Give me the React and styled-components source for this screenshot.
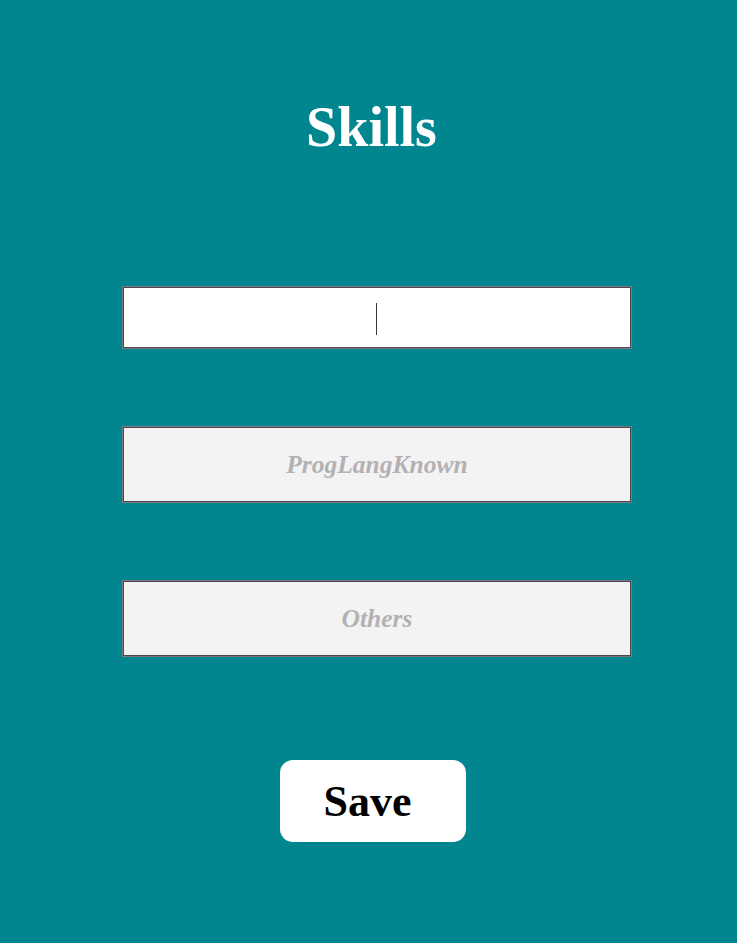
import React from "react";
import styled, { createGlobalStyle } from "styled-components";

const Global = createGlobalStyle`
  html, body { margin: 0; padding: 0; background: #018690; }
  body { font-family: "Liberation Serif", "Times New Roman", serif; }
`;

const Page = styled.main`
  min-height: 943px;
  background: #018690;
  display: flex;
  flex-direction: column;
  align-items: center;
  padding-top: 99px;
  box-sizing: border-box;
`;

const Title = styled.h1`
  margin: 0;
  font-size: 56px;
  line-height: 56px;
  font-weight: 700;
  color: #ffffff;
  padding-left: 6px;
`;

const Form = styled.form`
  display: flex;
  flex-direction: column;
  align-items: center;
  margin-top: 131px;
  width: 510px;
  margin-left: 17px;
`;

const FieldWrap = styled.div`
  position: relative;
  width: 510px;
  margin-bottom: ${(p) => p.$gap}px;
`;

const Field = styled.input`
  display: block;
  box-sizing: border-box;
  width: 510px;
  height: ${(p) => p.$h}px;
  margin: 0;
  border: 1px solid #7b7a82;
  box-shadow: inset 0 0 0 1px #4b4652;
  background: ${(p) => (p.$active ? "#ffffff" : "#f3f3f3")};
  text-align: center;
  font-family: "Liberation Serif", "Times New Roman", serif;
  font-size: 25.5px;
  font-style: italic;
  font-weight: 700;
  color: #333;
  outline: none;
  caret-color: #333;
  &::placeholder {
    color: #b3b1b3;
    font-style: italic;
    font-weight: 700;
  }
`;

const Caret = styled.span`
  position: absolute;
  left: 254px;
  top: 17px;
  width: 1px;
  height: 32px;
  background: #3a3a3a;
  pointer-events: none;
`;

const SaveButton = styled.button`
  width: 186px;
  height: 82px;
  border: none;
  border-radius: 13px;
  background: #ffffff;
  color: #000;
  font-family: "Liberation Serif", "Times New Roman", serif;
  font-size: 44px;
  font-weight: 700;
  padding: 0 10px 0 0;
  margin-left: -9px;
  cursor: pointer;
`;

export default function App() {
  return (
    <Page>
      <Global />
      <Title>Skills</Title>
      <Form onSubmit={(e) => e.preventDefault()}>
        <FieldWrap $gap={77}>
          <Field $h={63} $active aria-label="Skill" />
          <Caret />
        </FieldWrap>
        <FieldWrap $gap={77}>
          <Field $h={77} placeholder="ProgLangKnown" />
        </FieldWrap>
        <FieldWrap $gap={103}>
          <Field $h={77} placeholder="Others" />
        </FieldWrap>
        <SaveButton type="submit">Save</SaveButton>
      </Form>
    </Page>
  );
}
